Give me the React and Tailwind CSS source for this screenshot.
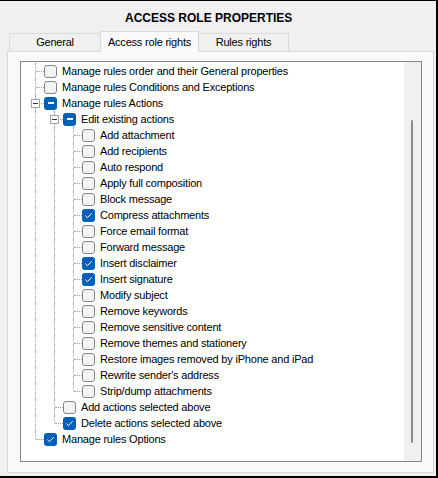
import React from "react";

const PL = ["pl-[23px]", "pl-[42px]", "pl-[61px]"];
const LX = ["left-[14px]", "left-[33px]", "left-[52px]"];
const HX = ["left-[15px]", "left-[34px]", "left-[53px]"];
const EX = ["left-[10px]", "left-[29px]", "left-[48px]"];

const rows = [
  { level: 0, label: "Manage rules order and their General properties", state: "u" },
  { level: 0, label: "Manage rules Conditions and Exceptions", state: "u" },
  { level: 0, label: "Manage rules Actions", state: "i", expander: true },
  { level: 1, label: "Edit existing actions", state: "i", expander: true },
  { level: 2, label: "Add attachment", state: "u" },
  { level: 2, label: "Add recipients", state: "u" },
  { level: 2, label: "Auto respond", state: "u" },
  { level: 2, label: "Apply full composition", state: "u" },
  { level: 2, label: "Block message", state: "u" },
  { level: 2, label: "Compress attachments", state: "c" },
  { level: 2, label: "Force email format", state: "u" },
  { level: 2, label: "Forward message", state: "u" },
  { level: 2, label: "Insert disclaimer", state: "c" },
  { level: 2, label: "Insert signature", state: "c" },
  { level: 2, label: "Modify subject", state: "u" },
  { level: 2, label: "Remove keywords", state: "u" },
  { level: 2, label: "Remove sensitive content", state: "u" },
  { level: 2, label: "Remove themes and stationery", state: "u" },
  { level: 2, label: "Restore images removed by iPhone and iPad", state: "u" },
  { level: 2, label: "Rewrite sender's address", state: "u" },
  { level: 2, label: "Strip/dump attachments", state: "u", last: true },
  { level: 1, label: "Add actions selected above", state: "u" },
  { level: 1, label: "Delete actions selected above", state: "c", last: true },
  { level: 0, label: "Manage rules Options", state: "c", last: true },
];

const DOT = "border-dotted border-[#a0a0a0]";

function Check({ state }) {
  if (state === "u") {
    return <div className="w-[13px] h-[13px] shrink-0 rounded-[3px] border border-[#868686] bg-[#f3f3f3]" />;
  }
  return (
    <div className="w-[13px] h-[13px] shrink-0 rounded-[3px] bg-[#005fb8] flex items-center justify-center">
      {state === "c" ? (
        <svg width="13" height="13" viewBox="0 0 13 13">
          <path d="M3.6 6.9 L5.5 8.7 L9.4 4.6" fill="none" stroke="#ffffff" strokeWidth="1" strokeLinecap="round" strokeLinejoin="round" />
        </svg>
      ) : (
        <div className="w-[6px] h-[1.5px] bg-white" />
      )}
    </div>
  );
}

function Row({ r, anc }) {
  const L = r.level;
  return (
    <div className={`relative flex h-[16px] items-center ${PL[L]}`}>
      {anc.map((cont, i) =>
        cont ? <div key={i} className={`absolute top-0 bottom-0 ${LX[i]} border-l ${DOT}`} /> : null
      )}
      <div className={`absolute top-0 ${r.last ? "h-[8px]" : "bottom-0"} ${LX[L]} border-l ${DOT}`} />
      <div className={`absolute top-[8px] ${HX[L]} w-[8px] border-t ${DOT}`} />
      {r.expander && (
        <>
          <div className={`absolute top-[14px] bottom-0 ${LX[L + 1]} border-l ${DOT}`} />
          <div className={`absolute top-[4px] ${EX[L]} w-[9px] h-[9px] border border-[#a3a3a3] bg-white flex items-center justify-center`}>
            <div className="w-[5px] h-px bg-[#333333]" />
          </div>
        </>
      )}
      <Check state={r.state} />
      <span className="ml-[5px] whitespace-nowrap text-[11px] tracking-[-0.2px] leading-[16px]">{r.label}</span>
    </div>
  );
}

export default function App() {
  const lastAt = { 0: true, 1: true, 2: true };
  // compute ancestor continuation flags
  const rendered = [];
  const open = [true, false, false];
  rows.forEach((r, idx) => {
    const anc = [];
    for (let i = 0; i < r.level; i++) anc.push(open[i]);
    rendered.push(<Row key={idx} r={r} anc={anc} />);
    open[r.level] = !r.last;
  });
  void lastAt;
  return (
    <div className="w-[438px] h-[478px] bg-[#f0f0f0] border-t border-r-2 border-b-2 border-black flex flex-col overflow-hidden text-black font-['Liberation_Sans',Arial,sans-serif]">
      <div className="h-[30px] pt-[9px] pl-[125px] text-[12px] leading-[16px] font-bold whitespace-nowrap">
        ACCESS ROLE PROPERTIES
      </div>
      <div className="flex items-end h-[20px] pl-[9px]">
        <div className="h-[18px] w-[91px] border-l border-t border-[#d9d9d9] bg-[#f0f0f0] flex items-center justify-center text-[11px] tracking-[-0.2px]">
          General
        </div>
        <div className="relative z-10 -mb-px h-[21px] w-[99px] border-x border-t border-[#d9d9d9] bg-[#f9f9f9] flex items-center justify-center text-[11px] tracking-[-0.2px]">
          Access role rights
        </div>
        <div className="h-[18px] w-[90px] border-r border-t border-[#d9d9d9] bg-[#f0f0f0] flex items-center justify-center text-[11px] tracking-[-0.2px]">
          Rules rights
        </div>
      </div>
      <div className="ml-[7px] w-[427px] h-[422px] border border-[#d9d9d9] bg-[#f9f9f9] pl-[12px] pt-[9px]">
        <div className="w-[402px] h-[401px] border border-[#828790] bg-white flex">
          <div className="flex-1 pt-px overflow-hidden flex flex-col">{rendered}</div>
          <div className="w-[17px] bg-[#f0f0f0]">
            <div className="mt-[58px] ml-[7px] w-[2px] h-[323px] rounded-full bg-[#8b8b8b]" />
          </div>
        </div>
      </div>
    </div>
  );
}
